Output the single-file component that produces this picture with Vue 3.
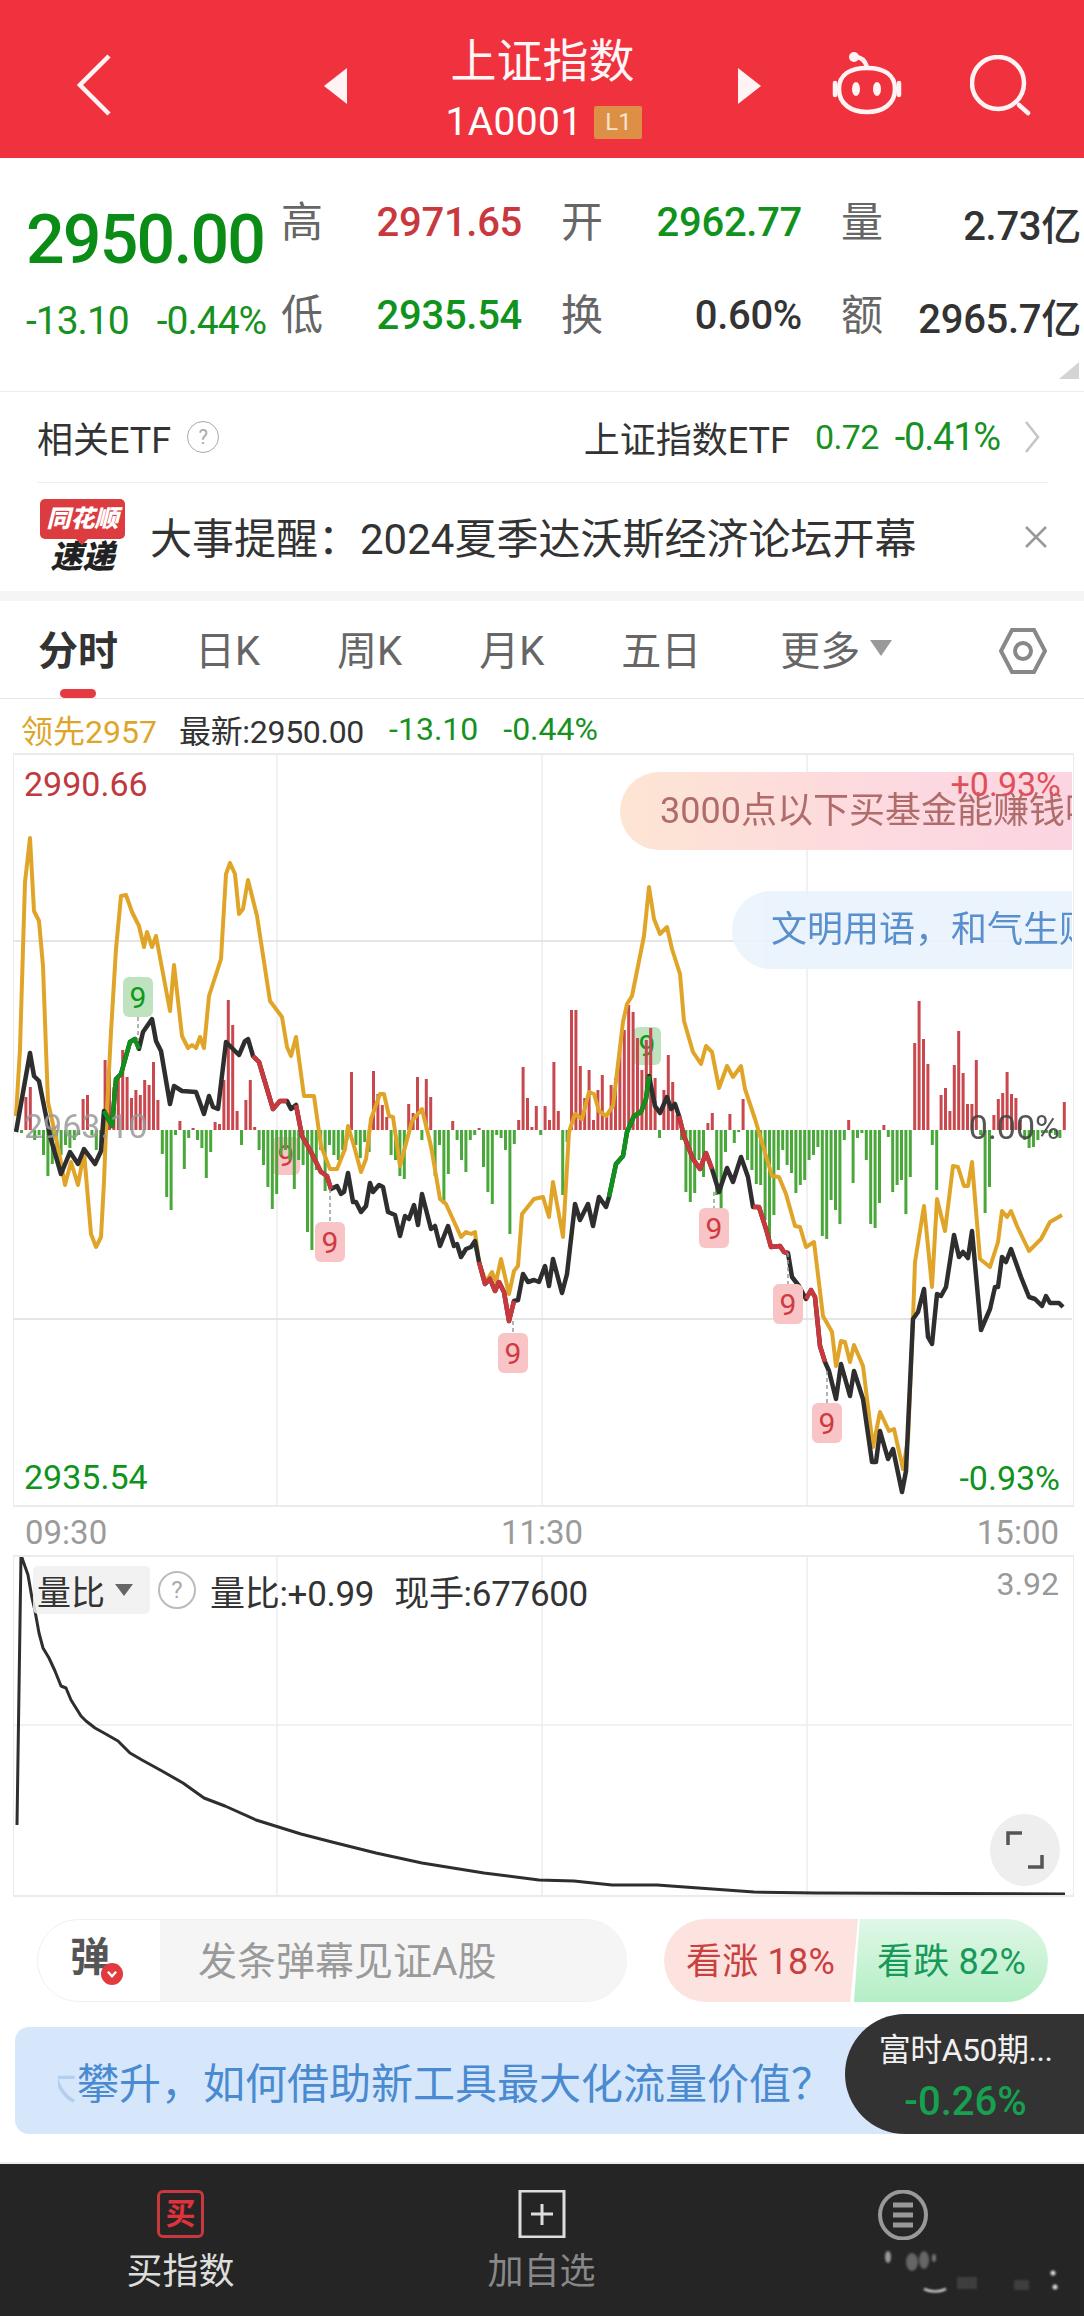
<script setup>
const bars = [0,-3,33,43,-10,-5,-25,-46,-34,-20,-25,-15,-18,-10,-5,31,35,-5,-20,-25,70,78,43,55,80,53,32,40,35,50,45,68,30,-24,-67,-80,-5,9,-39,-8,2,-10,-18,-48,-22,8,6,50,130,105,19,-15,30,50,3,-20,-35,-57,-79,-64,-25,-20,-30,-59,-30,-35,-102,-120,-40,-20,-61,-15,-25,-30,-20,-10,58,-15,-28,-12,-22,59,36,25,13,-25,-30,-46,-49,26,17,53,-10,51,33,-46,-15,-74,-44,9,-10,-30,-42,-10,-5,2,-37,-62,-74,-5,-8,-20,-104,-14,10,63,32,3,24,-5,
24,10,68,19,-65,-12,120,120,64,32,60,10,40,55,15,45,52,82,100,125,118,92,60,90,102,52,-8,40,75,48,15,-10,-62,-72,-63,-30,-47,7,17,-65,-89,-22,16,-13,-2,31,-30,-40,-54,-55,-90,-110,-85,-40,-20,-35,-43,-63,-55,-50,-30,-25,-17,-106,-109,-70,-80,-94,-10,10,-53,-8,-3,-30,-94,-98,-73,5,-7,-62,-55,-50,-84,-47,87,129,91,66,-15,-60,35,42,19,65,99,57,26,26,70,-5,-83,-57,15,31,37,58,36,32,10,-10,-18,-17,-10,-3,-3,-3,-5,-8,28]
const barRects = bars.map((v, i) => ({
  x: 15.6 + i * 4.4,
  y: v > 0 ? 1131 - v : 1131,
  h: Math.abs(v),
  c: v > 0 ? '#c8484e' : '#4aa83a'
}))

const gold = [16,1117,20,1050,25,883,30,839,34,912,39,922,43,967,46,1050,48,1103,54,1130,59,1153,65,1186,71,1163,78,1186,84,1153,91,1235,96,1248,101,1238,104,1183,106,1130,111,1033,116,950,121,897,126,896,132,913,139,927,144,948,147,933,152,948,156,937,170,1012,174,966,182,1037,188,1049,192,1046,196,1049,200,1038,204,1049,209,997,221,960,226,875,230,864,235,875,239,915,243,910,248,881,257,917,270,1002,282,1018,287,1048,291,1057,296,1038,304,1097,314,1097,321,1147,330,1170,337,1170,345,1150,348,1127,354,1147,361,1173,366,1160,371,1120,380,1095,384,1095,389,1117,393,1118,400,1167,412,1122,422,1110,430,1143,432,1153,440,1200,446,1205,461,1238,466,1233,471,1235,475,1233,479,1263,486,1283,492,1273,496,1283,501,1260,509,1295,514,1272,518,1267,522,1215,534,1200,543,1198,549,1218,553,1183,563,1238,569,1133,575,1115,582,1120,589,1093,594,1095,599,1112,606,1117,613,1107,623,1023,627,1005,632,997,644,937,649,888,654,920,660,935,667,928,672,950,680,975,684,1022,693,1053,701,1065,706,1047,712,1053,719,1089,727,1067,733,1078,741,1067,745,1090,755,1120,766,1157,772,1177,779,1178,786,1195,795,1227,800,1228,806,1248,814,1243,823,1317,832,1333,836,1367,841,1342,845,1343,850,1363,854,1346,863,1367,873,1448,880,1413,889,1432,894,1430,903,1470,908,1440,913,1320,915,1263,924,1207,932,1288,937,1200,945,1232,953,1167,958,1168,964,1187,968,1187,972,1163,980,1260,990,1268,998,1243,1002,1212,1007,1218,1011,1212,1017,1227,1029,1252,1041,1240,1050,1223,1057,1219,1062,1216]
const black = [16,1133,30,1054,34,1077,39,1082,45,1112,50,1137,61,1175,70,1153,78,1165,84,1150,95,1165,101,1152,104,1112,112,1127,116,1080,121,1075,130,1043,135,1040,139,1050,143,1033,152,1020,156,1042,161,1052,170,1105,174,1087,182,1092,196,1093,204,1115,209,1097,213,1108,218,1110,226,1043,230,1047,239,1056,245,1042,248,1040,253,1057,259,1063,273,1110,280,1102,287,1102,291,1110,296,1106,302,1137,311,1153,321,1173,327,1177,331,1190,337,1187,341,1195,344,1193,348,1174,353,1203,356,1203,361,1213,366,1207,370,1184,373,1193,379,1186,383,1188,388,1213,395,1216,400,1237,405,1217,409,1220,414,1206,418,1226,422,1195,431,1230,435,1227,440,1247,448,1227,454,1247,457,1245,461,1258,466,1250,471,1248,475,1242,479,1263,485,1285,490,1280,495,1292,499,1283,504,1293,509,1322,514,1302,518,1301,523,1275,528,1283,534,1281,539,1283,545,1267,549,1287,553,1260,562,1294,567,1275,575,1205,580,1221,588,1205,593,1227,599,1198,606,1208,609,1198,616,1165,623,1157,627,1133,634,1117,641,1113,646,1100,649,1077,655,1107,660,1114,667,1098,671,1110,675,1105,679,1117,684,1137,693,1160,700,1170,706,1154,712,1170,719,1193,727,1169,733,1183,741,1158,748,1178,753,1208,759,1208,766,1230,771,1248,780,1247,784,1253,788,1254,792,1278,799,1287,806,1300,811,1291,815,1298,820,1347,825,1363,829,1372,836,1400,841,1365,850,1397,854,1372,863,1400,872,1463,876,1463,880,1432,888,1460,893,1450,902,1493,906,1472,913,1320,918,1313,924,1290,928,1338,932,1345,937,1295,941,1297,946,1288,954,1236,959,1258,963,1253,968,1259,972,1232,981,1331,990,1310,995,1288,998,1288,1002,1258,1006,1263,1011,1250,1021,1278,1029,1298,1035,1300,1042,1307,1046,1297,1050,1304,1059,1304,1063,1308]

const toPoints = (a) => {
  const out = []
  for (let i = 0; i < a.length; i += 2) out.push(a[i] + ',' + a[i + 1])
  return out.join(' ')
}
const slice = (from, to) => {
  const out = []
  for (let i = 0; i < black.length; i += 2) {
    if (black[i] >= from && black[i] <= to) out.push(black[i], black[i + 1])
  }
  return toPoints(out)
}
const goldLine = toPoints(gold)
const blackLine = toPoints(black)
const colored = [
  { c: '#12901c', p: slice(104, 139) },
  { c: '#12901c', p: slice(609, 649) },
  { c: '#c8383c', p: slice(253, 287) },
  { c: '#c8383c', p: slice(296, 331) },
  { c: '#c8383c', p: slice(479, 514) },
  { c: '#c8383c', p: slice(679, 712) },
  { c: '#c8383c', p: slice(753, 788) },
  { c: '#c8383c', p: slice(806, 825) }
]
const under = [
  { x: 286, y: 1157, red: true },
  { x: 647, y: 1047, red: false }
]
const over = [
  { x: 138, y: 998, y1: 1018, y2: 1042, red: false },
  { x: 330, y: 1243, y1: 1190, y2: 1224, red: true },
  { x: 513, y: 1354, y1: 1322, y2: 1336, red: true },
  { x: 714, y: 1229, y1: 1193, y2: 1210, red: true },
  { x: 788, y: 1305, y1: 1254, y2: 1287, red: true },
  { x: 827, y: 1424, y1: 1372, y2: 1406, red: true }
]
const volume = [17,1827,21,1557,28,1577,32,1600,35,1613,39,1635,43,1650,49,1660,55,1673,61,1688,66,1690,71,1702,76,1710,81,1718,86,1723,95,1730,104,1735,118,1743,130,1755,142,1762,162,1773,183,1785,204,1800,225,1808,256,1822,301,1836,332,1844,376,1855,422,1865,484,1875,539,1882,574,1883,612,1887,657,1887,754,1894,816,1895,1065,1896]
const volumeLine = toPoints(volume)
const tabs = ['日K', '周K', '月K', '五日']
const grids = [277, 542, 807]
const newsText = '大事提醒\uFF1A2024夏季达沃斯经济论坛开幕'
const pillB = '文明用语\uFF0C和气生财'
const tickerText = '攀升\uFF0C如何借助新工具最大化流量价值\uFF1F'
</script>

<template>
  <div class="page">
    <header class="top">
      <svg class="back" viewBox="0 0 34 62"><path d="M32 2 3 31l29 29" /></svg>
      <span class="tri tri-l"></span>
      <div class="title">
        <div class="name">上证指数</div>
        <div class="code">1A0001<span class="lv">L1</span></div>
      </div>
      <span class="tri tri-r"></span>
      <svg class="robot" viewBox="0 0 72 68">
        <path class="line" d="M8 38C8 23 20 17 36 17s28 6 28 21-12 23-28 23S8 53 8 38Z" />
        <path class="line" d="M24 6c6 0 10 3 12 10" />
        <circle cx="23" cy="6" r="5" fill="#fff3f3" />
        <path class="line" d="M4 32v12M68 32v12" />
        <ellipse cx="25" cy="38" rx="4" ry="7" fill="#fff3f3" />
        <ellipse cx="46" cy="38" rx="4" ry="7" fill="#fff3f3" />
      </svg>
      <svg class="search" viewBox="0 0 62 62">
        <circle class="line" cx="28" cy="28" r="26" />
        <path class="line" d="m49 50 9 8" />
      </svg>
    </header>

    <section class="info">
      <div class="price">
        <div class="big">2950.00</div>
        <div class="chg"><span>-13.10</span><span>-0.44%</span></div>
      </div>
      <div class="stats">
        <span class="k">高</span><span class="v red">2971.65</span>
        <span class="k">开</span><span class="v green">2962.77</span>
        <span class="k">量</span><span class="v">2.73亿</span>
        <span class="k">低</span><span class="v green">2935.54</span>
        <span class="k">换</span><span class="v">0.60%</span>
        <span class="k">额</span><span class="v">2965.7亿</span>
      </div>
      <span class="corner"></span>
    </section>

    <section class="etf">
      <div class="etf-row">
        <span class="etf-l">相关ETF</span>
        <span class="q">?</span>
        <span class="etf-name">上证指数ETF</span>
        <span class="etf-v">0.72</span>
        <span class="etf-p">-0.41%</span>
        <svg class="chev" viewBox="0 0 16 34"><path d="m2 2 12 15L2 32" /></svg>
      </div>
      <div class="news">
        <div class="logo">
          <div class="logo-a">同花顺</div>
          <div class="logo-b">速递</div>
        </div>
        <span class="news-t">{{ newsText }}</span>
        <svg class="close" viewBox="0 0 24 24"><path d="m2 2 20 20M22 2 2 22" /></svg>
      </div>
    </section>

    <div class="gap"></div>

    <nav class="tabs">
      <span class="tab on">分时</span>
      <span v-for="t in tabs" :key="t" class="tab">{{ t }}</span>
      <span class="tab more">更多<i class="down"></i></span>
      <svg class="hex" viewBox="0 0 48 46">
        <path d="M13 2h22l11 21-11 21H13L2 23Z" />
        <circle cx="24" cy="23" r="8" />
      </svg>
      <span class="mark"></span>
    </nav>

    <div class="legend">
      <span class="lead">领先2957</span>
      <span class="latest">最新:2950.00</span>
      <span class="lg">-13.10</span>
      <span class="lg">-0.44%</span>
    </div>

    <div class="chart">
      <svg class="plot" viewBox="0 754 1084 754">
        <line v-for="x in grids" :key="x" :x1="x" :x2="x" y1="754" y2="1507" class="grid" />
        <line x1="13" x2="1072" y1="942" y2="942" class="grid2" />
        <line x1="13" x2="1072" y1="1320" y2="1320" class="grid2" />
        <g v-for="b in under" :key="b.x">
          <rect :x="b.x - 14" :y="b.y - 19" width="28" height="38" rx="6" :fill="b.red ? '#f8c4c6' : '#bfe2bf'" />
          <text :x="b.x" :y="b.y + 10" class="nine" :fill="b.red ? '#cf3a42' : '#0c9a1a'">9</text>
        </g>
        <rect v-for="(b, i) in barRects" :key="i" :x="b.x" :y="b.y" width="3" :height="b.h" :fill="b.c" />
        <polyline :points="goldLine" class="ln gold" />
        <polyline :points="blackLine" class="ln dark" />
        <polyline v-for="(s, i) in colored" :key="i" :points="s.p" class="ln" :stroke="s.c" />
        <g v-for="b in over" :key="b.x">
          <line :x1="b.x" :x2="b.x" :y1="b.y1" :y2="b.y2" class="dash" />
          <rect :x="b.x - 15" :y="b.y - 20" width="30" height="40" rx="6" :fill="b.red ? '#f8c4c6' : '#bfe2bf'" />
          <text :x="b.x" :y="b.y + 11" class="nine" :fill="b.red ? '#cf3a42' : '#0c9a1a'">9</text>
        </g>
      </svg>
      <div class="pill pill-a">3000点以下买基金能赚钱吗</div>
      <div class="pill pill-b">{{ pillB }}</div>
      <span class="lab hi">2990.66</span>
      <span class="lab hi-p">+0.93%</span>
      <span class="lab mid">2963.10</span>
      <span class="lab mid-p">0.00%</span>
      <span class="lab lo">2935.54</span>
      <span class="lab lo-p">-0.93%</span>
    </div>

    <div class="times"><span>09:30</span><span>11:30</span><span>15:00</span></div>

    <div class="sub">
      <svg class="plot" viewBox="0 1557 1084 342">
        <line v-for="x in grids" :key="x" :x1="x" :x2="x" y1="1557" y2="1897" class="grid" />
        <line x1="13" x2="1072" y1="1727" y2="1727" class="grid" />
        <polyline :points="volumeLine" class="vol" />
      </svg>
      <div class="sub-head">
        <span class="chip">量比<i class="down small"></i></span>
        <span class="q q2">?</span>
        <span class="sub-t">量比:+0.99</span>
        <span class="sub-t">现手:677600</span>
        <span class="sub-max">3.92</span>
      </div>
      <div class="full">
        <svg viewBox="0 0 38 38"><path d="M2 14V2h14M36 24v12H22" /></svg>
      </div>
    </div>

    <div class="actions">
      <div class="danmu">
        <div class="dan-icon">弹<span class="tick"><svg viewBox="0 0 12 12"><path d="m2.5 4 3.5 4 3.5-4" /></svg></span></div>
        <div class="dan-input">发条弹幕见证A股</div>
      </div>
      <div class="vote">
        <span class="up">看涨 18%</span>
        <span class="fall">看跌 82%</span>
      </div>
    </div>

    <div class="ticker">
      <span class="tk-fade">大</span>
      <span class="tk-text">{{ tickerText }}</span>
      <div class="float">
        <div class="f-name">富时A50期...</div>
        <div class="f-val">-0.26%</div>
      </div>
    </div>

    <footer class="bottom">
      <div class="b-item">
        <span class="b-buy"><em>买</em></span>
        <span class="b-l on-l">买指数</span>
      </div>
      <div class="b-item">
        <svg class="b-ic" viewBox="0 0 48 48"><path d="M2 1h44v46H2ZM24 14v21M13 24h22" /></svg>
        <span class="b-l">加自选</span>
      </div>
      <div class="b-item">
        <svg class="b-ic b-menu" viewBox="0 0 50 50">
          <ellipse cx="25" cy="25" rx="23" ry="23.5" />
          <path d="M15 15h20M15 25h20M15 35h20" />
        </svg>
        <svg class="smear" viewBox="0 0 244 76">
          <ellipse cx="48" cy="17" rx="3" ry="6" fill="#9a9a9a" />
          <ellipse cx="72" cy="22" rx="6" ry="9" fill="#666" />
          <ellipse cx="84" cy="20" rx="5" ry="9" fill="#666" />
          <ellipse cx="94" cy="18" rx="2" ry="4" fill="#777" />
          <path d="M84 49q11 5 22 0" stroke="#e8e8e8" stroke-width="2" fill="none" />
          <rect x="117" y="37" width="20" height="12" fill="#3e3e3e" />
          <rect x="174" y="40" width="15" height="10" fill="#3e3e3e" />
          <circle cx="213" cy="33" r="2.5" fill="#ddd" />
          <circle cx="215" cy="47" r="2.5" fill="#ddd" />
        </svg>
      </div>
    </footer>
  </div>
</template>

<style>
html, body { margin: 0; background: #fff; }
</style>

<style scoped>
.page {
  width: 1084px;
  height: 2316px;
  overflow: hidden;
  position: relative;
  background: #fff;
  font-family: Roboto, "Noto Sans CJK SC", sans-serif;
  color: #333;
}
.top {
  height: 158px;
  box-sizing: border-box;
  background: #f0323f;
  display: flex;
  align-items: center;
  padding-left: 77px;
  color: #fff;
}
.back { width: 34px; height: 62px; margin-top: 11px; flex: none; }
.back path { fill: none; stroke: #fff3f3; stroke-width: 4.5; }
.tri { width: 0; height: 0; border-top: 18px solid transparent; border-bottom: 18px solid transparent; margin-top: 14px; flex: none; }
.tri-l { border-right: 23px solid #fff3f3; margin-left: 213px; }
.tri-r { border-left: 23px solid #fff3f3; }
.title { width: 391px; flex: none; text-align: center; }
.name { font-size: 46px; line-height: 60px; height: 60px; margin-top: 18px; color: #fff6f6; }
.code { font-size: 39px; line-height: 46px; margin-top: 8px; display: flex; justify-content: center; align-items: center; padding-left: 3px; letter-spacing: .3px; }
.lv { width: 48px; height: 33px; margin-left: 12px; background: #dd8f46; font-size: 24px; line-height: 33px; border-radius: 2px; color: #f6e3cc; letter-spacing: 0; }
.robot { width: 72px; height: 68px; margin-left: 70px; margin-top: 12px; flex: none; }
.search { width: 62px; height: 62px; margin-left: 67px; margin-top: 14px; flex: none; }
.line { fill: none; stroke: #fff3f3; stroke-width: 4.5; stroke-linecap: round; }

.info {
  position: relative;
  height: 234px;
  box-sizing: border-box;
  display: flex;
  padding-left: 26px;
  border-bottom: 1px solid #ececec;
}
.price { width: 255px; flex: none; }
.big { font-size: 68px; line-height: 70px; margin-top: 47px; color: #0b8c16; font-weight: 500; letter-spacing: -1.8px; white-space: nowrap; }
.chg { margin-top: 26px; font-size: 39px; line-height: 40px; color: #17911f; display: flex; gap: 28px; letter-spacing: -1px; white-space: nowrap; }
.stats {
  display: grid;
  grid-template-columns: 42px 199px 81px 199px 81px 198px;
  grid-auto-rows: 93px;
  padding-top: 18px;
  align-items: center;
}
.k { font-size: 42px; color: #666; text-align: right; line-height: 1; }
.v { font-size: 40px; text-align: right; color: #333; font-weight: 500; letter-spacing: -.3px; white-space: nowrap; }
.red { color: #c8383e; }
.green { color: #0f931c; }
.corner { position: absolute; right: 5px; top: 204px; width: 0; height: 0; border-left: 20px solid transparent; border-bottom: 17px solid #d4d4d4; }

.etf { padding: 0 36px 0 37px; }
.etf-row { height: 90px; display: flex; align-items: center; border-bottom: 1px solid #efefef; }
.etf-l { font-size: 36px; color: #333; }
.q { width: 30px; height: 30px; margin-left: 16px; border: 1.5px solid #aaa; border-radius: 50%; font-size: 20px; line-height: 30px; color: #aaa; text-align: center; flex: none; }
.etf-name { font-size: 36px; margin-left: auto; color: #333; }
.etf-v { font-size: 34px; color: #17911f; margin-left: 25px; letter-spacing: -.6px; }
.etf-p { font-size: 38px; color: #17911f; margin-left: 16px; letter-spacing: -1.2px; }
.chev { width: 16px; height: 34px; margin-left: 24px; margin-right: 8px; flex: none; }
.chev path { fill: none; stroke: #c4c4c4; stroke-width: 2.5; }
.news { height: 108px; display: flex; align-items: center; }
.logo { width: 85px; margin-left: 3px; flex: none; text-align: center; }
.logo-a { background: #dc3b3f; color: #fff; font-size: 24px; font-weight: 900; font-style: italic; line-height: 40px; height: 40px; border-radius: 5px; position: relative; white-space: nowrap; }
.logo-a::after { content: ""; position: absolute; left: 36px; bottom: -6px; border-left: 6px solid transparent; border-right: 6px solid transparent; border-top: 6px solid #dc3b3f; }
.logo-b { font-size: 32px; font-weight: 900; font-style: italic; line-height: 36px; margin-top: 0; color: #222; }
.news-t { font-size: 42px; margin: -4px 0 0 25px; color: #333; white-space: nowrap; }
.close { width: 24px; height: 24px; margin-left: auto; flex: none; }
.close path { fill: none; stroke: #999; stroke-width: 2.5; }
.gap { height: 10px; background: #f5f5f5; }

.tabs {
  height: 97px;
  box-sizing: border-box;
  position: relative;
  display: flex;
  align-items: center;
  gap: 77px;
  padding: 0 37px 4px 38px;
}
.tab { font-size: 40px; color: #666; white-space: nowrap; }
.tab.on { font-size: 40px; font-weight: 700; color: #333; }
.more { display: flex; align-items: center; margin-left: 2px; }
.down { display: inline-block; width: 0; height: 0; margin-left: 10px; border-left: 11px solid transparent; border-right: 11px solid transparent; border-top: 16px solid #999; }
.down.small { border-left-width: 9px; border-right-width: 9px; border-top-width: 12px; border-top-color: #666; margin-left: 10px; }
.hex { width: 48px; height: 46px; margin-left: auto; margin-top: 6px; flex: none; }
.hex path, .hex circle { fill: none; stroke: #888; stroke-width: 4; }
.mark { position: absolute; left: 60px; bottom: 0; width: 36px; height: 9px; background: #e63a43; border-radius: 5px; }

.legend {
  height: 55px;
  box-sizing: border-box;
  border-top: 1px solid #e8e8e8;
  display: flex;
  align-items: center;
  padding: 5px 0 0 21px;
  font-size: 32px;
  white-space: nowrap;
}
.lead { color: #dda62a; }
.latest { color: #333; margin-left: 22px; letter-spacing: -.3px; }
.lg { color: #17911f; margin-left: 25px; }

.chart { position: relative; height: 754px; overflow: hidden; }
.chart::after { content: ""; position: absolute; left: 13px; top: 0; width: 1059px; height: 750px; border: 2px solid #ebebeb; border-width: 2px 1px 2px 1px; pointer-events: none; }
.plot { position: absolute; left: 0; top: 0; width: 1084px; height: 100%; display: block; }
.grid { stroke: #ececec; stroke-width: 1.5; }
.grid2 { stroke: #dcdcdc; stroke-width: 1.5; }
.ln { fill: none; stroke-width: 4.5; stroke-linejoin: round; }
.gold { stroke: #e0a528; stroke-width: 4; }
.dark { stroke: #2e2e2e; }
.dash { stroke: #999; stroke-width: 1.5; stroke-dasharray: 4 3; }
.nine { font-size: 30px; text-anchor: middle; font-family: Roboto, sans-serif; }
.pill { position: absolute; height: 78px; line-height: 78px; white-space: nowrap; overflow: hidden; }
.pill-a { left: 620px; top: 19px; width: 452px; padding-left: 40px; box-sizing: border-box; font-size: 36px; color: #a9605e; border-radius: 39px 0 0 39px; background: linear-gradient(90deg, #fde3d0, #fdd6de 60%, #fbd3e0); opacity: .92; }
.pill-b { left: 732px; top: 138px; width: 340px; padding-left: 39px; box-sizing: border-box; font-size: 36px; color: #4a86c8; border-radius: 39px 0 0 39px; background: #eaf3fc; opacity: .92; }
.lab { position: absolute; font-size: 34px; line-height: 40px; white-space: nowrap; }
.hi { left: 24px; top: 11px; color: #c0393f; }
.hi-p { right: 23px; top: 11px; color: #e0505a; }
.mid { left: 24px; top: 353px; color: #999; opacity: .85; }
.mid-p { right: 24px; top: 354px; color: #444; opacity: .9; }
.lo { left: 24px; top: 704px; color: #0f931c; }
.lo-p { right: 24px; top: 705px; color: #0f931c; }

.times { height: 48px; display: flex; justify-content: space-between; align-items: center; padding: 2px 25px 0; box-sizing: border-box; font-size: 33px; color: #9b9b9b; }
.sub { position: relative; height: 342px; }
.sub::after { content: ""; position: absolute; left: 13px; top: 0; width: 1059px; height: 338px; border: 2px solid #ebebeb; border-width: 2px 1px 2px 1px; pointer-events: none; }
.vol { fill: none; stroke: #2e2e2e; stroke-width: 3; stroke-linejoin: round; }
.sub-head { position: absolute; left: 33px; right: 25px; top: 11px; height: 48px; display: flex; align-items: center; }
.chip { width: 117px; height: 48px; box-sizing: border-box; padding-left: 4px; display: flex; align-items: center; background: rgba(240, 240, 240, .85); border-radius: 5px; font-size: 34px; color: #333; }
.q2 { width: 34px; height: 34px; line-height: 34px; margin-left: 8px; font-size: 24px; border-width: 2px; border-color: #bbb; }
.sub-t { font-size: 35px; color: #333; margin-left: 20px; white-space: nowrap; letter-spacing: -.3px; }
.q2 + .sub-t { margin-left: 14px; }
.sub-max { font-size: 32px; color: #999; margin-left: auto; margin-top: -12px; }
.full { position: absolute; left: 990px; top: 259px; width: 70px; height: 72px; border-radius: 50%; background: #eee; display: flex; align-items: center; justify-content: center; }
.full svg { width: 38px; height: 38px; }
.full path { fill: none; stroke: #555; stroke-width: 3.5; }

.actions { display: flex; padding: 22px 36px 0 37px; height: 83px; }
.danmu { width: 590px; height: 83px; box-sizing: border-box; display: flex; border: 1.5px solid #f0f0f0; border-radius: 42px; overflow: hidden; }
.dan-icon { width: 122px; flex: none; position: relative; box-sizing: border-box; padding: 12px 0 0 32px; font-size: 40px; font-weight: 700; color: #555; line-height: 52px; }
.tick { position: absolute; left: 63px; top: 43px; width: 22px; height: 22px; border-radius: 50%; background: #e23b3f; display: flex; align-items: center; justify-content: center; }
.tick svg { width: 14px; height: 14px; }
.tick path { fill: none; stroke: #fff; stroke-width: 2; }
.dan-input { flex: 1; background: #f5f5f5; padding-left: 38px; font-size: 39px; line-height: 84px; color: #9a9a9a; }
.vote { display: flex; margin-left: 37px; position: relative; }
.up, .fall { height: 83px; line-height: 86px; font-size: 36px; white-space: nowrap; box-sizing: border-box; letter-spacing: .2px; }
.up { width: 194px; padding-left: 22px; color: #c9413f; background: #fde3e0; border-radius: 42px 0 0 42px; clip-path: polygon(0 0, 100% 0, 96% 100%, 0 100%); }
.fall { width: 194px; margin-left: -4px; padding-left: 23px; color: #17995a; background: linear-gradient(180deg, #e0f7e7, #b4efc5); border-radius: 0 42px 42px 0; clip-path: polygon(3% 0, 100% 0, 100% 100%, 0 100%); }
.ticker { position: relative; height: 107px; margin: 25px 0 0 15px; background: #d6e7fb; border-radius: 14px 0 0 14px; display: flex; align-items: center; padding-left: 43px; }
.tk-fade { width: 19px; overflow: hidden; flex: none; font-size: 42px; color: #4a8ad0; opacity: .25; direction: rtl; white-space: nowrap; }
.tk-text { font-size: 42px; color: #4a8ad0; white-space: nowrap; }
.float { position: absolute; right: 0; top: -13px; width: 239px; height: 120px; box-sizing: border-box; background: #333; border-radius: 60px 0 0 60px; text-align: center; padding: 14px 0 0 2px; }
.f-name { font-size: 32px; line-height: 44px; color: #f0f0f0; white-space: nowrap; letter-spacing: -.5px; }
.f-val { font-size: 40px; line-height: 54px; color: #16a050; font-weight: 500; margin-top: 3px; }
.bottom { position: absolute; left: 0; right: 0; bottom: 0; height: 154px; background: #252525; border-top: 2px solid #eee; box-sizing: border-box; display: grid; grid-template-columns: 361px 361px 362px; }
.b-item { display: flex; flex-direction: column; align-items: center; padding-top: 26px; position: relative; }
.b-buy { width: 47px; height: 48px; box-sizing: border-box; border: 3px solid #c8383c; border-radius: 6px; display: flex; align-items: center; justify-content: center; }
.b-buy em { font-style: normal; font-size: 30px; font-weight: 700; color: #e0323c; line-height: 1; }
.b-ic { width: 48px; height: 48px; flex: none; }
.b-ic path { fill: none; stroke: #ddd; stroke-width: 3; }
.b-menu { width: 50px; height: 50px; }
.b-menu ellipse { fill: none; stroke: #999; stroke-width: 4; }
.b-menu path { stroke: #999; stroke-width: 5; }
.b-l { margin-top: 10px; font-size: 36px; line-height: 48px; color: #888; }
.on-l { color: #ddd; }
.smear { position: absolute; left: 118px; top: 76px; width: 244px; height: 76px; filter: blur(1.2px); }
</style>
